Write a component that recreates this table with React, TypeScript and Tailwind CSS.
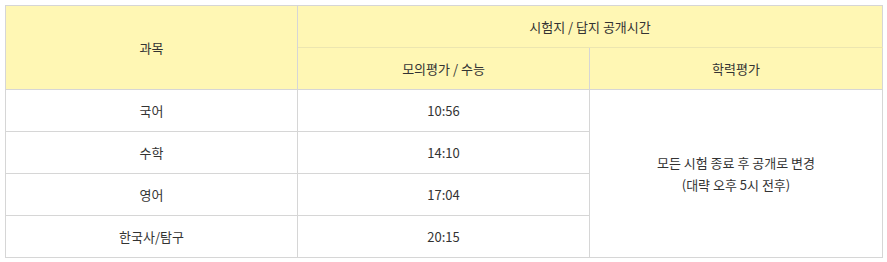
import React from "react";

export default function App() {
  const rows = [
    ["국어", "10:56"],
    ["수학", "14:10"],
    ["영어", "17:04"],
    ["한국사/탐구", "20:15"],
  ];
  const cell = "border border-[#d6d6d6] h-[42px] p-0 text-center align-middle";
  return (
    <div
      className="p-[5px] bg-white text-[13px] text-[#333]"
      style={{ fontFamily: '"Noto Sans CJK KR", "Noto Sans", sans-serif' }}
    >
      <table className="border-collapse w-[878px] table-fixed">
        <colgroup>
          <col className="w-[292px]" />
          <col className="w-[292px]" />
          <col />
        </colgroup>
        <thead>
          <tr className="bg-[#fff7b4]">
            <th rowSpan={2} className={`${cell} font-normal`}>과목</th>
            <th colSpan={2} className={`${cell} font-normal border-b-[#ece6b0]`}>시험지 / 답지 공개시간</th>
          </tr>
          <tr className="bg-[#fff7b4]">
            <th className={`${cell} font-normal border-t-[#ece6b0]`}>모의평가 / 수능</th>
            <th className={`${cell} font-normal border-t-[#ece6b0]`}>학력평가</th>
          </tr>
        </thead>
        <tbody>
          {rows.map((r, i) => (
            <tr key={r[0]}>
              <td className={`${cell} border-t-[#e4e4e4]`}>{r[0]}</td>
              <td className={`${cell} border-t-[#e4e4e4]`}>{r[1]}</td>
              {i === 0 && (
                <td rowSpan={4} className={`${cell} leading-[22px]`}>
                  모든 시험 종료 후 공개로 변경
                  <br />
                  (대략 오후 5시 전후)
                </td>
              )}
            </tr>
          ))}
        </tbody>
      </table>
    </div>
  );
}
